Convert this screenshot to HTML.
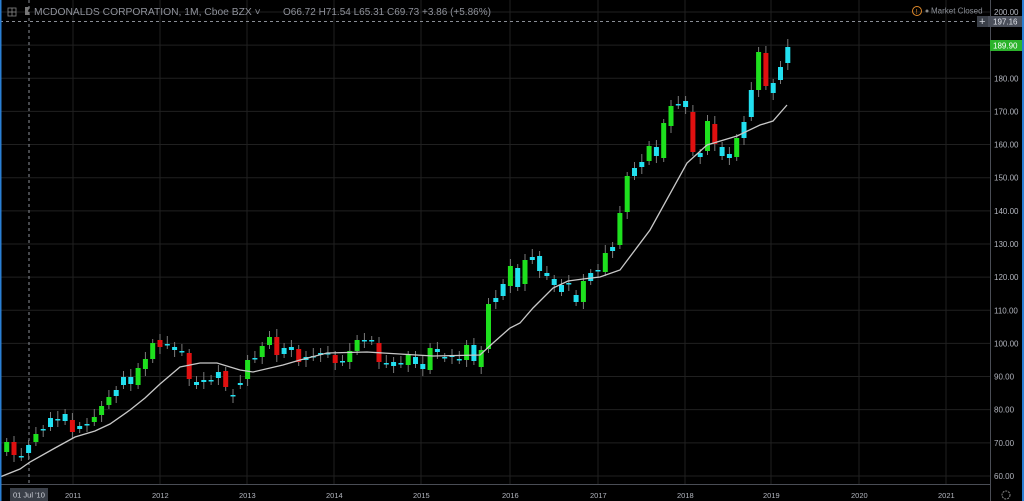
<!DOCTYPE html>
<html><head><meta charset="utf-8"><style>
html,body{margin:0;padding:0;background:#000;width:1024px;height:501px;overflow:hidden}
svg{display:block;font-family:"Liberation Sans",sans-serif}
</style></head><body>
<svg id="s" width="1024" height="501" viewBox="0 0 1024 501" xmlns="http://www.w3.org/2000/svg">
<rect width="1024" height="501" fill="#000"/>
<g id="grid"></g>
<line x1="29" y1="0" x2="29" y2="484" stroke="#8a8e96" stroke-dasharray="3,3" stroke-width="1"/>
<line x1="0" y1="21.5" x2="990" y2="21.5" stroke="#8a8e96" stroke-dasharray="3,3" stroke-width="1"/>
<g id="c"></g>
<polyline fill="none" stroke="#c8c8c8" stroke-width="1.3" points="0,477 20,469 30,462 55,448 75,437 95,431 110,424 130,410 145,398 160,384 180,367 200,363 217,363 240,370 253,372 283,365 300,360 327,353 367,352 383,353 433,356 480,355 493,343 510,328 520,323 533,308 553,288 568,281 583,279 600,277 620,270 650,230 687,163 707,145 737,136 760,125 773,121 787,105"/>
<line x1="0" y1="484.5" x2="990" y2="484.5" stroke="#4a4d55"/>
<line x1="990.5" y1="0" x2="990.5" y2="501" stroke="#4a4d55"/>
<rect x="0" y="0" width="1.5" height="501" fill="#2a7fd4"/>
<rect x="1022" y="0" width="2" height="501" fill="#2a7fd4"/>
<g id="lab" font-size="8" fill="#b2b5be"></g>
<rect x="10" y="488" width="38" height="13" fill="#3a3f48"/>
<text x="13" y="497.5" font-size="7.5" fill="#d0d3da">01 Jul '10</text>
<rect x="977" y="16" width="11" height="11" fill="#3a3f48"/>
<text x="979" y="25" font-size="11" fill="#d0d3da">+</text>
<rect x="988" y="16" width="34" height="11" fill="#4a4f5a"/>
<text x="993" y="24.5" font-size="8" fill="#e0e3ea">197.16</text>
<rect x="990" y="40" width="32" height="11" fill="#2bb32b"/>
<text x="993" y="48.5" font-size="8" fill="#fff">189.90</text>
<circle cx="1006" cy="495" r="4" fill="none" stroke="#888" stroke-width="1" stroke-dasharray="2,1"/>
<circle cx="917" cy="11" r="4.5" fill="none" stroke="#e08a2a" stroke-width="1"/>
<text x="915.8" y="13.8" font-size="7" fill="#e08a2a">!</text>
<circle cx="927" cy="11" r="1.5" fill="#888"/>
<text x="931" y="13.5" font-size="8" fill="#8a8e96">Market Closed</text>
<rect x="8" y="8" width="8" height="8" fill="none" stroke="#888" stroke-width="0.8"/>
<line x1="12" y1="8" x2="12" y2="16" stroke="#888" stroke-width="0.8"/><line x1="8" y1="12" x2="16" y2="12" stroke="#888" stroke-width="0.8"/>
<path d="M25 7 h5 l-2 4 l2 4 h-5z" fill="#777"/>
<text x="34" y="15" font-size="10.3" fill="#8e919a">MCDONALDS CORPORATION, 1M, Cboe BZX ˅</text>
<text x="283" y="15" font-size="10" fill="#8e919a">O66.72 H71.54 L65.31 C69.73 +3.86 (+5.86%)</text>
</svg>
<script>
var NS="http://www.w3.org/2000/svg";
function el(p,t,a,txt){var e=document.createElementNS(NS,t);for(var k in a)e.setAttribute(k,a[k]);if(txt)e.textContent=txt;p.appendChild(e);return e;}
var g=document.getElementById('grid'),lab=document.getElementById('lab');
for(var p=60;p<=200;p+=10){var y=12+(200-p)*3.314;el(g,'line',{x1:0,x2:990,y1:y,y2:y,stroke:'#202020'});el(lab,'text',{x:994,y:y+3},p.toFixed(2));}
var yrs=[[73,'2011'],[160,'2012'],[247,'2013'],[334,'2014'],[421,'2015'],[510,'2016'],[598,'2017'],[685,'2018'],[771,'2019'],[859,'2020'],[946,'2021']];
yrs.forEach(function(a){el(g,'line',{x1:a[0],x2:a[0],y1:0,y2:484,stroke:'#202020'});el(lab,'text',{x:a[0]-8,y:498,'font-size':7.5,fill:'#b2b5be'},a[1]);});
var d=[[442,452,'g'],[442,455,'r'],[456,457,'c'],[445,453,'c'],[434,442,'g'],[429,430,'c'],[418,427,'c'],[419,420,'c'],[414,421,'c'],[420,432,'r'],[426,429,'c'],[424,425,'c'],[417,422,'g'],[406,415,'g'],[397,405,'g'],[390,396,'c'],[377,385,'c'],[377,384,'c'],[368,385,'g'],[359,369,'g'],[343,359,'g'],[340,347,'r'],[344,345,'c'],[347,350,'c'],[351,352,'c'],[353,379,'r'],[382,385,'c'],[380,382,'c'],[380,381,'c'],[372,378,'c'],[371,387,'r'],[395,396,'c'],[383,385,'c'],[360,379,'g'],[358,359,'c'],[346,357,'g'],[337,345,'g'],[337,355,'r'],[348,354,'c'],[347,350,'c'],[349,362,'r'],[357,360,'c'],[356,357,'c'],[353,355,'c'],[353,354,'c'],[355,363,'r'],[361,362,'c'],[351,362,'g'],[340,351,'g'],[340,341,'c'],[340,341,'c'],[343,362,'r'],[363,364,'c'],[362,366,'c'],[363,364,'c'],[355,365,'g'],[357,364,'c'],[364,369,'c'],[348,370,'g'],[349,352,'c'],[357,358,'c'],[355,357,'c'],[359,360,'c'],[345,360,'g'],[345,361,'c'],[350,367,'g'],[304,349,'g'],[298,302,'c'],[284,296,'c'],[266,286,'g'],[268,287,'c'],[260,284,'g'],[257,260,'c'],[256,271,'c'],[273,276,'c'],[279,285,'c'],[285,292,'c'],[283,284,'c'],[295,302,'c'],[281,302,'g'],[273,281,'c'],[270,271,'c'],[253,272,'g'],[247,251,'c'],[213,245,'g'],[176,212,'g'],[168,176,'c'],[162,167,'c'],[146,161,'g'],[147,156,'c'],[123,158,'g'],[106,126,'g'],[104,105,'c'],[101,107,'c'],[112,152,'r'],[153,157,'c'],[121,151,'g'],[124,144,'r'],[147,156,'c'],[154,158,'c'],[138,157,'g'],[122,138,'c'],[90,117,'c'],[52,90,'g'],[53,86,'r'],[83,93,'c'],[67,80,'c'],[47,63,'c']];
var col={g:'#1ee01e',r:'#e01010',c:'#22e0f0'};
var cg=document.getElementById('c');
d.forEach(function(a,i){var x=6.7+7.3*i;var t=a[0],b=a[1];var w1=t-4-(i*7%5),w2=b+4+(i*3%6);
el(cg,'line',{x1:x,x2:x,y1:w1,y2:w2,stroke:'#7a7a7a','stroke-width':1});
el(cg,'rect',{x:x-2.5,y:t,width:5,height:Math.max(b-t,1.5),fill:col[a[2]]});});
</script>
</body></html>
